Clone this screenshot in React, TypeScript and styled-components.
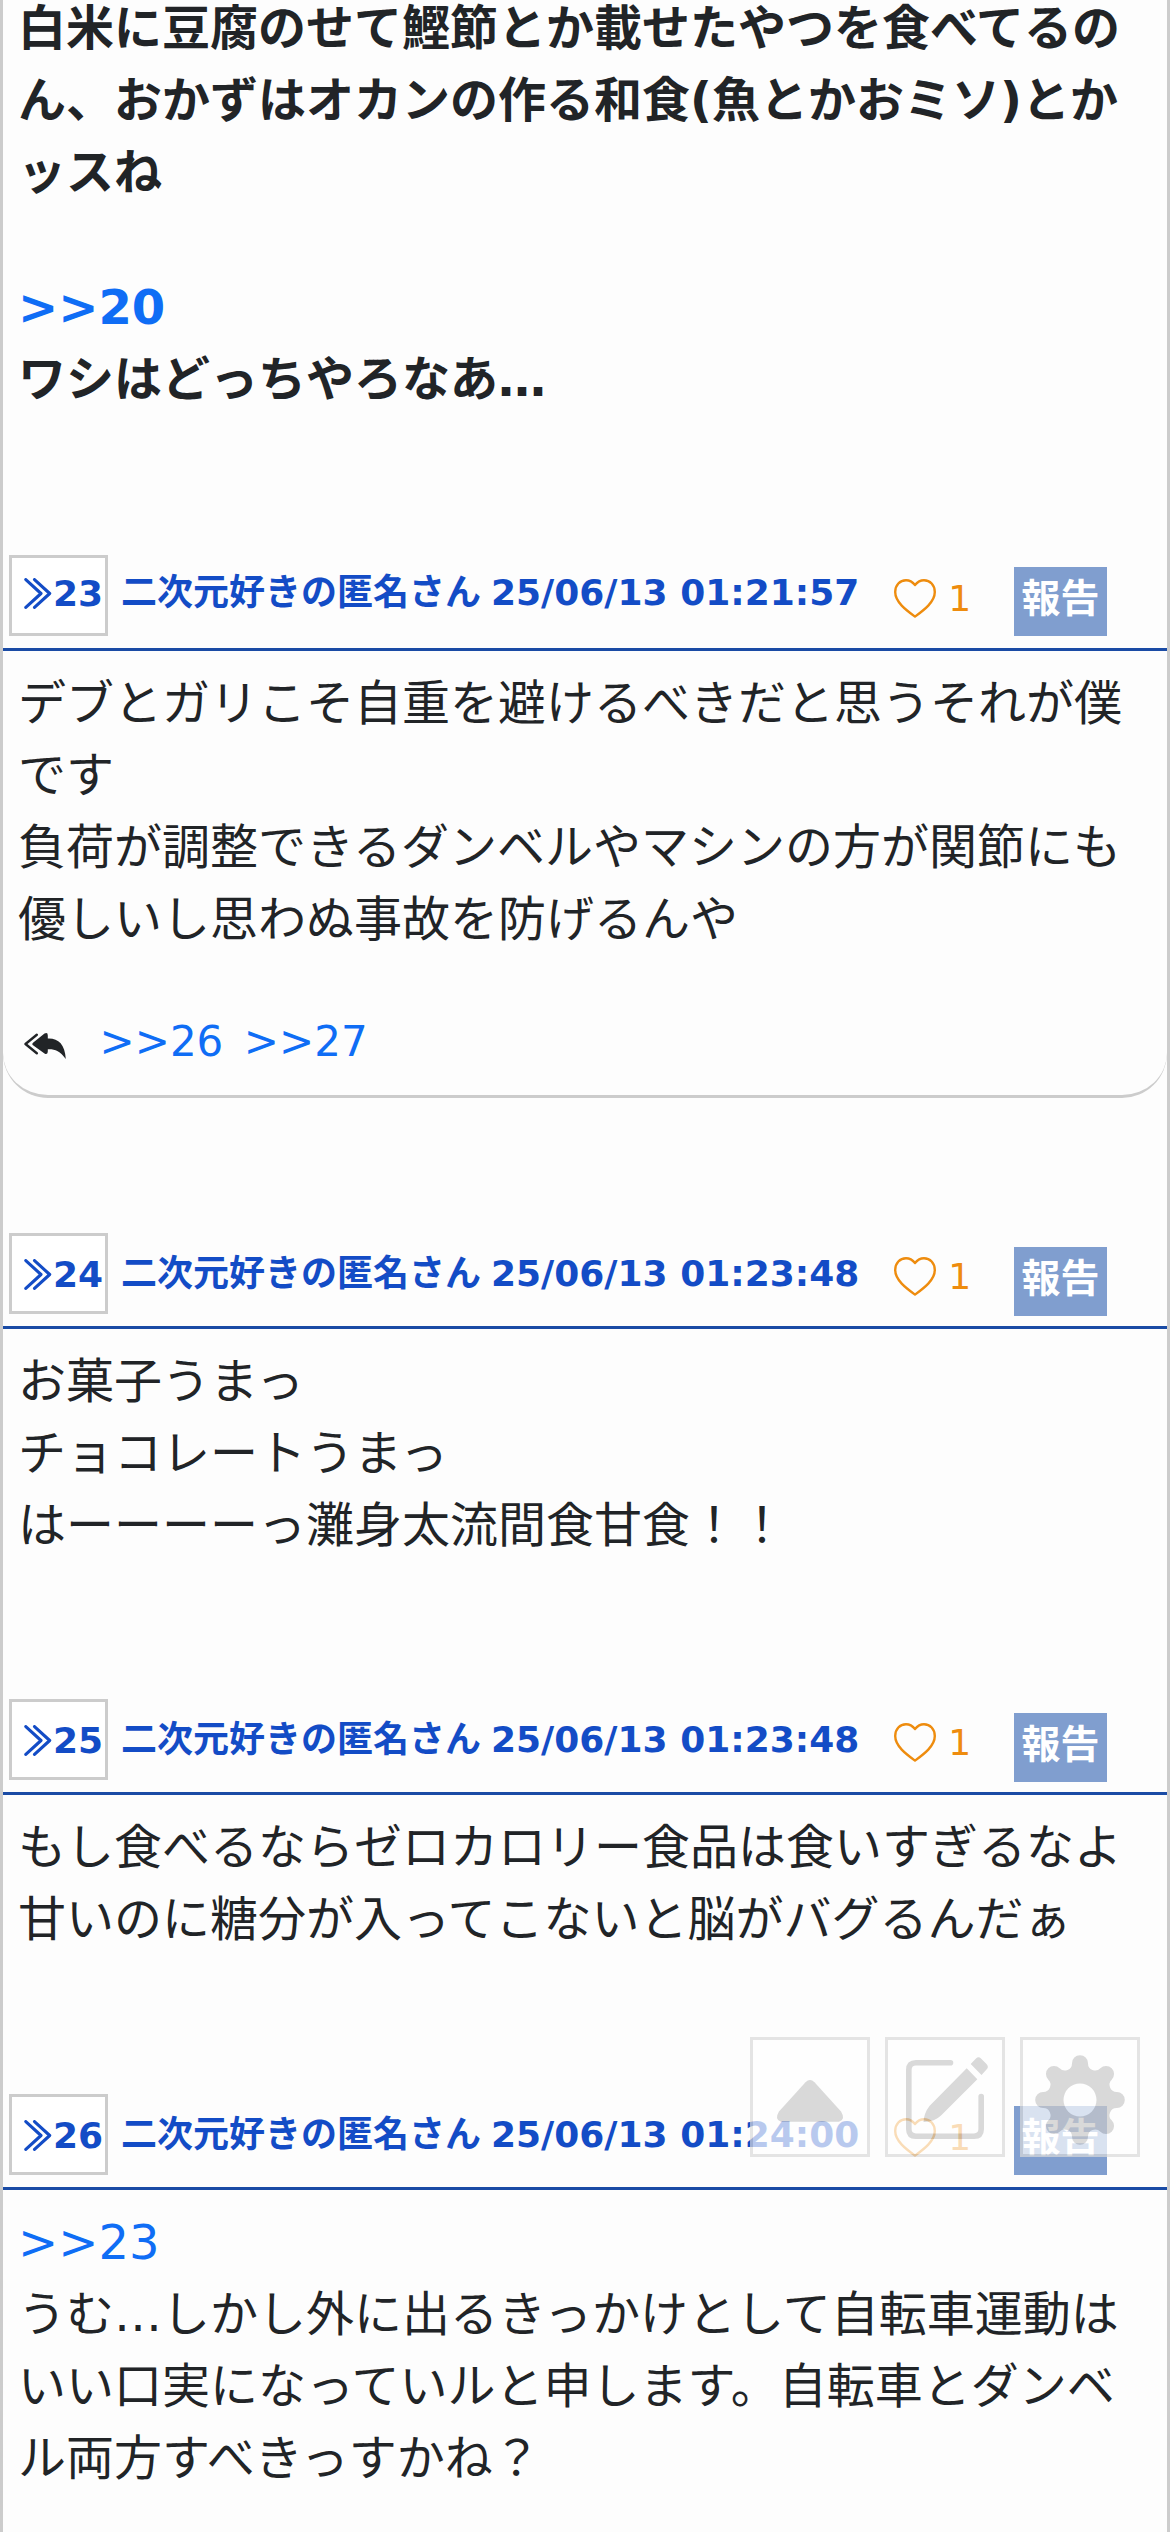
import React from 'react';
import styled, { createGlobalStyle } from 'styled-components';

const GlobalStyle = createGlobalStyle`
  * { box-sizing: border-box; }
  html, body { margin: 0; background: #fdfdfd; }
  body { height: 2532px; overflow: hidden; }
`;

const Page = styled.main`
  width: 1170px;
  height: 2532px;
  overflow: hidden;
  border-left: 3px solid #ccc;
  border-right: 3px solid #ccc;
  background: #fdfdfd;
  color: #212427;
  font-family: 'DejaVu Sans', 'Noto Sans CJK JP', sans-serif;
  font-size: 48px;
  line-height: 72px;
`;

const Post = styled.article<{ $height: number }>`
  display: flex;
  flex-direction: column;
  height: ${p => p.$height}px;
`;

const Header = styled.header`
  display: flex;
  align-items: flex-start;
  height: 96px;
  padding: 0 60px 0 6px;
  border-bottom: 3px solid #1a4ba5;
  font-size: 36px;
  line-height: 54px;
  color: #134cc6;
`;

const PostNumber = styled.button<{ $drop: number }>`
  display: flex;
  align-items: center;
  gap: 1px;
  width: 99px;
  height: 81px;
  padding: ${p => p.$drop * 2}px 0 4px 12px;
  border: 3px solid #ccc;
  background: #fff;
  color: inherit;
  font: bold 36px/54px 'DejaVu Sans', sans-serif;
  svg { flex: none; width: 28px; height: 31px; }
`;

const Author = styled.span<{ $drop: number }>`
  margin: ${p => 11 + p.$drop}px 0 0 13px;
  font-weight: bold;
  white-space: nowrap;
`;

const Time = styled.time<{ $drop: number }>`
  margin: ${p => 11 + p.$drop}px 0 0 10px;
  font-weight: bold;
  white-space: nowrap;
`;

const Like = styled.button`
  display: flex;
  align-items: center;
  margin: 17px 0 0 35px;
  padding: 0;
  border: 0;
  background: none;
  color: #ee8c0e;
  font: 36px/54px 'DejaVu Sans', sans-serif;
  svg { width: 42px; height: 39px; margin: -1px 12px 0 0; }
`;

const Report = styled.button<{ $top: number }>`
  width: 93px;
  height: 69px;
  margin: ${p => p.$top}px 0 0 auto;
  padding: 0 0 6px;
  border: 0;
  background: #809ecf;
  color: #fff;
  font: bold 39px/58px 'DejaVu Sans', 'Noto Sans CJK JP', sans-serif;
  white-space: nowrap;
`;

const Body = styled.div`
  padding: 16px 15px 0;
`;

const ScrolledBody = styled(Body)`
  margin-top: -8px;
  padding-top: 0;
  font-weight: bold;
`;

const Line = styled.p`
  margin: 0;
  height: 72px;
  white-space: nowrap;
`;

const BlankLine = styled.div`
  height: 63px;
`;

const Anchor = styled.a`
  color: #0f6df5;
  text-decoration: none;
`;

const Replies = styled.footer`
  display: flex;
  align-items: center;
  gap: 20.5px;
  height: 107px;
  margin-top: 36px;
  padding: 0 0 3px 21px;
  border-bottom: 3px solid #ccc;
  border-radius: 0 0 45px 45px;
  font-size: 42px;
  svg { width: 42px; height: 26px; margin: 9px 13px 0 0; }
`;

const Tools = styled.nav`
  position: absolute;
  left: 750px;
  top: 2037px;
  display: flex;
  gap: 15px;
`;

const Tool = styled.button`
  width: 120px;
  height: 120px;
  padding: 0;
  border: 3px solid #dadada;
  background: #fff;
  opacity: 0.7;
  svg { display: block; width: 114px; height: 114px; }
`;

const ChevronsIcon = () => (
  <svg viewBox="0 0 28 31" fill="none" stroke="currentColor" strokeWidth="3.1" strokeLinecap="round" strokeLinejoin="round">
    <path d="M1.800 1.600L17 15.500L1.800 29.400M10.500 1.600L25.700 15.500L10.500 29.400" />
  </svg>
);

const HeartIcon = () => (
  <svg viewBox="0 0 42 39" fill="none" stroke="currentColor" strokeWidth="2.4" strokeLinejoin="round">
    <path d="M21 6C18.500 2.800 15.500 1.200 12 1.200C6 1.200 1.200 6 1.200 13C1.200 23 12 31 21 37.600C30 31 40.800 23 40.800 13C40.800 6 36 1.200 30 1.200C26.500 1.200 23.500 2.800 21 6Z" />
  </svg>
);

const ReplyAllIcon = () => (
  <svg viewBox="0 0 42 26">
    <path d="M12.800 1.800L1.500 11L12.800 20.200" fill="none" stroke="currentColor" strokeWidth="2.4" strokeLinecap="round" strokeLinejoin="round" />
    <path d="M20.500 0.600Q23.800 -1 23.800 2.500V5.500C34 5 41 11 41.800 26C36 17.500 30 15.800 23.800 16.200V18.500Q23.800 22 20.500 20.400L9 12.300Q7.600 11 9 9.700Z" fill="currentColor" />
  </svg>
);

const UpIcon = () => (
  <svg viewBox="0 0 114 114" fill="#cacaca">
    <path d="M52.500 42.200Q57 37.800 61.500 42.200L88 71.500Q93 79.500 86 81.800H28Q21 79.500 26 71.500Z" />
  </svg>
);

const EditIcon = () => (
  <svg viewBox="0 0 114 114" fill="none" stroke="#cacaca" strokeWidth="5.6" strokeLinecap="round" strokeLinejoin="round">
    <path d="M62.500 22.800H28Q20.800 22.800 20.800 30V89Q20.800 96.200 28 96.200H86Q93.200 96.200 93.200 89V56.500" />
    <path d="M78.700 28.300L89.300 39.300L53 75.500Q47 81.500 35.500 82Q36 73 41.500 66Z" fill="#cacaca" stroke="none" />
    <path d="M82.700 24L88 18.500Q90.500 16 93 18.500L98.500 24Q101.200 27 98.500 29.500L93.500 35Z" fill="#cacaca" stroke="none" />
  </svg>
);

// Eight round lobes joined by concave fillets, around a round hole.
const gearOutline = () => {
  const at = (x: number, y: number, turn: number) => {
    const a = (turn * Math.PI) / 4;
    const px = 57 + x * Math.cos(a) - y * Math.sin(a);
    const py = 60 + x * Math.sin(a) + y * Math.cos(a);
    return `${px.toFixed(2)} ${py.toFixed(2)}`;
  };
  let d = `M${at(-8, -36.8, 0)}`;
  for (let i = 0; i < 8; i++) {
    d += `A8 8 0 1 1 ${at(8, -36.8, i)}`;
    d += `A7.200 7.200 0 0 0 ${at(-8, -36.8, i + 1)}`;
  }
  return `${d}ZM57 43.500A16.500 16.500 0 1 0 57 76.500A16.500 16.500 0 1 0 57 43.500Z`;
};

const GearIcon = () => (
  <svg viewBox="0 0 114 114">
    <path fill="#cacaca" fillRule="evenodd" d={gearOutline()} />
  </svg>
);

interface HeaderProps {
  id: number;
  time: string;
  drop?: number;
  reportTop?: number;
}

const PostHeader = ({ id, time, drop = 3, reportTop = 12 }: HeaderProps) => (
  <Header>
    <PostNumber $drop={drop}><ChevronsIcon />{id}</PostNumber>
    <Author $drop={drop}>二次元好きの匿名さん</Author>
    <Time $drop={drop}>25/06/13 {time}</Time>
    <Like><HeartIcon />1</Like>
    <Report $top={reportTop}>報告</Report>
  </Header>
);

export default function App() {
  return (
    <>
      <GlobalStyle />
      <Page>
        <Post $height={555}>
          <ScrolledBody>
            <Line>白米に豆腐のせて鰹節とか載せたやつを食べてるの</Line>
            <Line>ん、おかずはオカンの作る和食(魚とかおミソ)とか</Line>
            <Line>ッスね</Line>
            <BlankLine />
            <Line><Anchor>&gt;&gt;20</Anchor></Line>
            <Line>ワシはどっちやろなあ…</Line>
          </ScrolledBody>
        </Post>
        <Post $height={678}>
          <PostHeader id={23} time="01:21:57" drop={0} />
          <Body>
            <Line>デブとガリこそ自重を避けるべきだと思うそれが僕</Line>
            <Line>です</Line>
            <Line>負荷が調整できるダンベルやマシンの方が関節にも</Line>
            <Line>優しいし思わぬ事故を防げるんや</Line>
          </Body>
          <Replies>
            <ReplyAllIcon />
            <Anchor>&gt;&gt;26</Anchor>
            <Anchor>&gt;&gt;27</Anchor>
          </Replies>
        </Post>
        <Post $height={466}>
          <PostHeader id={24} time="01:23:48" reportTop={14} />
          <Body>
            <Line>お菓子うまっ</Line>
            <Line>チョコレートうまっ</Line>
            <Line>はーーーーっ灘身太流間食甘食！！</Line>
          </Body>
        </Post>
        <Post $height={395}>
          <PostHeader id={25} time="01:23:48" reportTop={14} />
          <Body>
            <Line>もし食べるならゼロカロリー食品は食いすぎるなよ</Line>
            <Line>甘いのに糖分が入ってこないと脳がバグるんだぁ</Line>
          </Body>
        </Post>
        <Post $height={438}>
          <PostHeader id={26} time="01:24:00" />
          <Body>
            <Line><Anchor>&gt;&gt;23</Anchor></Line>
            <Line>うむ…しかし外に出るきっかけとして自転車運動は</Line>
            <Line>いい口実になっていルと申します。自転車とダンベ</Line>
            <Line>ル両方すべきっすかね？</Line>
          </Body>
        </Post>
      </Page>
      <Tools>
        <Tool><UpIcon /></Tool>
        <Tool><EditIcon /></Tool>
        <Tool><GearIcon /></Tool>
      </Tools>
    </>
  );
}
